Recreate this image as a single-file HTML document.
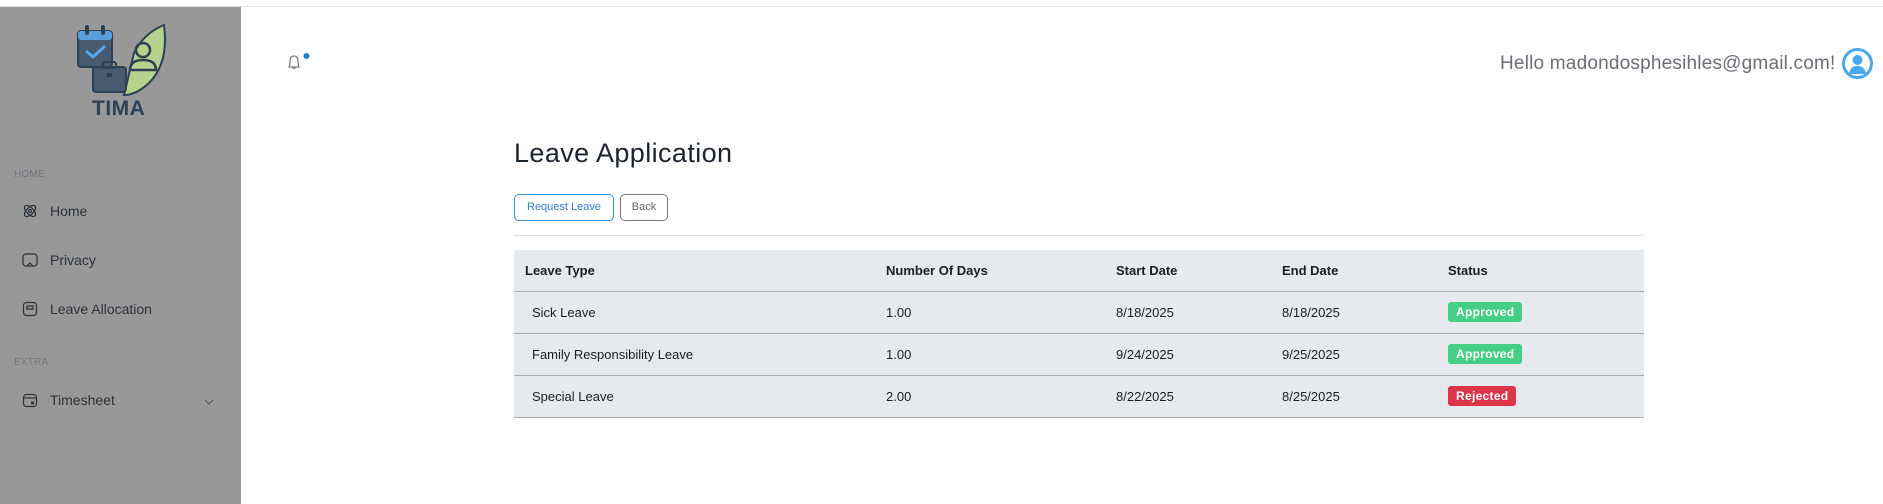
<!DOCTYPE html>
<html><head><meta charset="utf-8"><style>
*{margin:0;padding:0;box-sizing:border-box}
body{width:1883px;height:504px;overflow:hidden;background:#fff;font-family:"Liberation Sans",sans-serif;position:relative}
.topline{position:absolute;left:0;top:0;width:1883px;height:7px;background:#fff;border-bottom:1px solid #e3e3e3}
.side{position:absolute;left:0;top:7px;width:241px;height:497px;background:#989898}
.lbl{position:absolute;left:14px;font-size:10px;color:#6e767e;letter-spacing:.2px}
.item{position:absolute;left:22px;font-size:14px;color:#2b3138;display:flex;align-items:center}
.item svg{margin-right:12px}
.abs{position:absolute}
table{position:absolute;left:514px;top:250px;width:1130px;border-collapse:collapse;background:#e6eaee;font-size:13px;color:#1a1d21}
th{text-align:left;font-weight:bold;height:41px;padding:0;border-bottom:1px solid #a8adb2}
td{height:42px;padding:0;border-bottom:1px solid #a8adb2}
.b{display:inline-block;color:#fff;font-size:12px;font-weight:bold;padding:3px 8px;border-radius:3px;letter-spacing:.3px}
</style></head><body>
<div class="topline"></div>
<div class="side">
<svg class="abs" style="left:74px;top:16px" width="95" height="80" viewBox="0 0 95 80">
<path d="M60 30 Q70 10 90 2 Q95 40 75 60 Q62 72 50 72 Z" fill="#b6d28c" stroke="#2d4156" stroke-width="2"/>
<circle cx="69" cy="27" r="7" fill="none" stroke="#2d4156" stroke-width="2.5"/>
<path d="M56 47 Q56 37 69 37 Q82 37 82 47 Z" fill="none" stroke="#2d4156" stroke-width="2.5"/>
<rect x="4" y="8" width="34" height="36" rx="3" fill="#465a70" stroke="#2d4156" stroke-width="2"/>
<rect x="4" y="8" width="34" height="9" rx="3" fill="#5a9ee0"/>
<rect x="11" y="2" width="4" height="10" rx="2" fill="#2d4156"/><rect x="27" y="2" width="4" height="10" rx="2" fill="#2d4156"/>
<path d="M12 28 L19 34 L31 23" fill="none" stroke="#5aa6ee" stroke-width="3"/>
<rect x="19" y="44" width="33" height="25" rx="3" fill="#465a70" stroke="#2d4156" stroke-width="2"/>
<rect x="29" y="39" width="13" height="6" rx="2" fill="none" stroke="#2d4156" stroke-width="2"/>
<rect x="33" y="50" width="5" height="4" fill="#2d4156"/>
</svg>
<div class="abs" style="left:92px;top:90px;font-size:21px;font-weight:bold;color:#2d4156;letter-spacing:.5px">TIMA</div>
<div class="lbl" style="top:162px">HOME</div>
<div class="item" style="top:196px"><svg width="16" height="16" viewBox="0 0 16 16" fill="none" stroke="#2b3138" stroke-width="1.2"><ellipse cx="8" cy="8" rx="7" ry="3.5" transform="rotate(45 8 8)"/><ellipse cx="8" cy="8" rx="7" ry="3.5" transform="rotate(-45 8 8)"/><circle cx="8" cy="8" r="1.5"/></svg>Home</div>
<div class="item" style="top:245px"><svg width="16" height="16" viewBox="0 0 16 16" fill="none" stroke="#2b3138" stroke-width="1.2"><rect x="1" y="2" width="14" height="12" rx="3"/><path d="M5 14 L8 11 L11 14"/></svg>Privacy</div>
<div class="item" style="top:294px"><svg width="16" height="16" viewBox="0 0 16 16" fill="none" stroke="#2b3138" stroke-width="1.2"><rect x="1.5" y="1.5" width="13" height="13" rx="3"/><path d="M4 8 H12 M5 8 V5 H11 V8"/></svg>Leave Allocation</div>
<div class="lbl" style="top:350px">EXTRA</div>
<div class="item" style="top:385px"><svg width="16" height="16" viewBox="0 0 16 16" fill="none" stroke="#2b3138" stroke-width="1.2"><rect x="1.5" y="2.5" width="13" height="12" rx="3"/><path d="M1.5 6 H14.5"/><circle cx="10.5" cy="11" r="1"/></svg>Timesheet</div>
<svg class="abs" style="left:204px;top:392px" width="10" height="6" viewBox="0 0 10 6"><path d="M1 1 L5 5 L9 1" fill="none" stroke="#555" stroke-width="1"/></svg>
</div>
<svg class="abs" style="left:285px;top:53px" width="26" height="20" viewBox="0 0 26 20"><path d="M4 14 Q5 12 5 8 Q5 3 9 3 Q13 3 13 8 Q13 12 14 14 Z M7 14 Q9 17 11 14" fill="none" stroke="#666" stroke-width="1.1"/><circle cx="21.5" cy="3" r="3" fill="#1a7fe0"/></svg>
<div class="abs" style="left:1500px;top:53px;font-size:19px;color:#6a6e74;letter-spacing:.2px">Hello madondosphesihles@gmail.com!</div>
<svg class="abs" style="left:1842px;top:48px" width="31" height="31" viewBox="0 0 31 31"><circle cx="15.5" cy="15.5" r="14" fill="#fff" stroke="#4aa8f0" stroke-width="3"/><circle cx="15.5" cy="12" r="5" fill="#4aa8f0"/><path d="M7 26 Q8 18 15.5 18 Q23 18 24 26 Z" fill="#4aa8f0"/></svg>
<div class="abs" style="left:514px;top:138px;font-size:27px;color:#1c2430;letter-spacing:.4px">Leave Application</div>
<div class="abs" style="left:514px;top:194px;width:100px;height:27px;border:1px solid #2f8fe0;border-radius:5px;color:#2a7fd4;font-size:11px;line-height:25px;text-align:center">Request Leave</div>
<div class="abs" style="left:620px;top:194px;width:48px;height:27px;border:1px solid #777;border-radius:5px;color:#666;font-size:11px;line-height:25px;text-align:center">Back</div>
<div class="abs" style="left:514px;top:235px;width:1130px;height:1px;background:#dcdcdc"></div>
<table>
<tr><th style="padding-left:11px;width:372px">Leave Type</th><th style="width:230px">Number Of Days</th><th style="width:166px">Start Date</th><th style="width:166px">End Date</th><th>Status</th></tr>
<tr><td style="padding-left:18px">Sick Leave</td><td>1.00</td><td>8/18/2025</td><td>8/18/2025</td><td><span class="b" style="background:#45cf85">Approved</span></td></tr>
<tr><td style="padding-left:18px">Family Responsibility Leave</td><td>1.00</td><td>9/24/2025</td><td>9/25/2025</td><td><span class="b" style="background:#45cf85">Approved</span></td></tr>
<tr><td style="padding-left:18px">Special Leave</td><td>2.00</td><td>8/22/2025</td><td>8/25/2025</td><td><span class="b" style="background:#dc3545">Rejected</span></td></tr>
</table>
</body></html>
